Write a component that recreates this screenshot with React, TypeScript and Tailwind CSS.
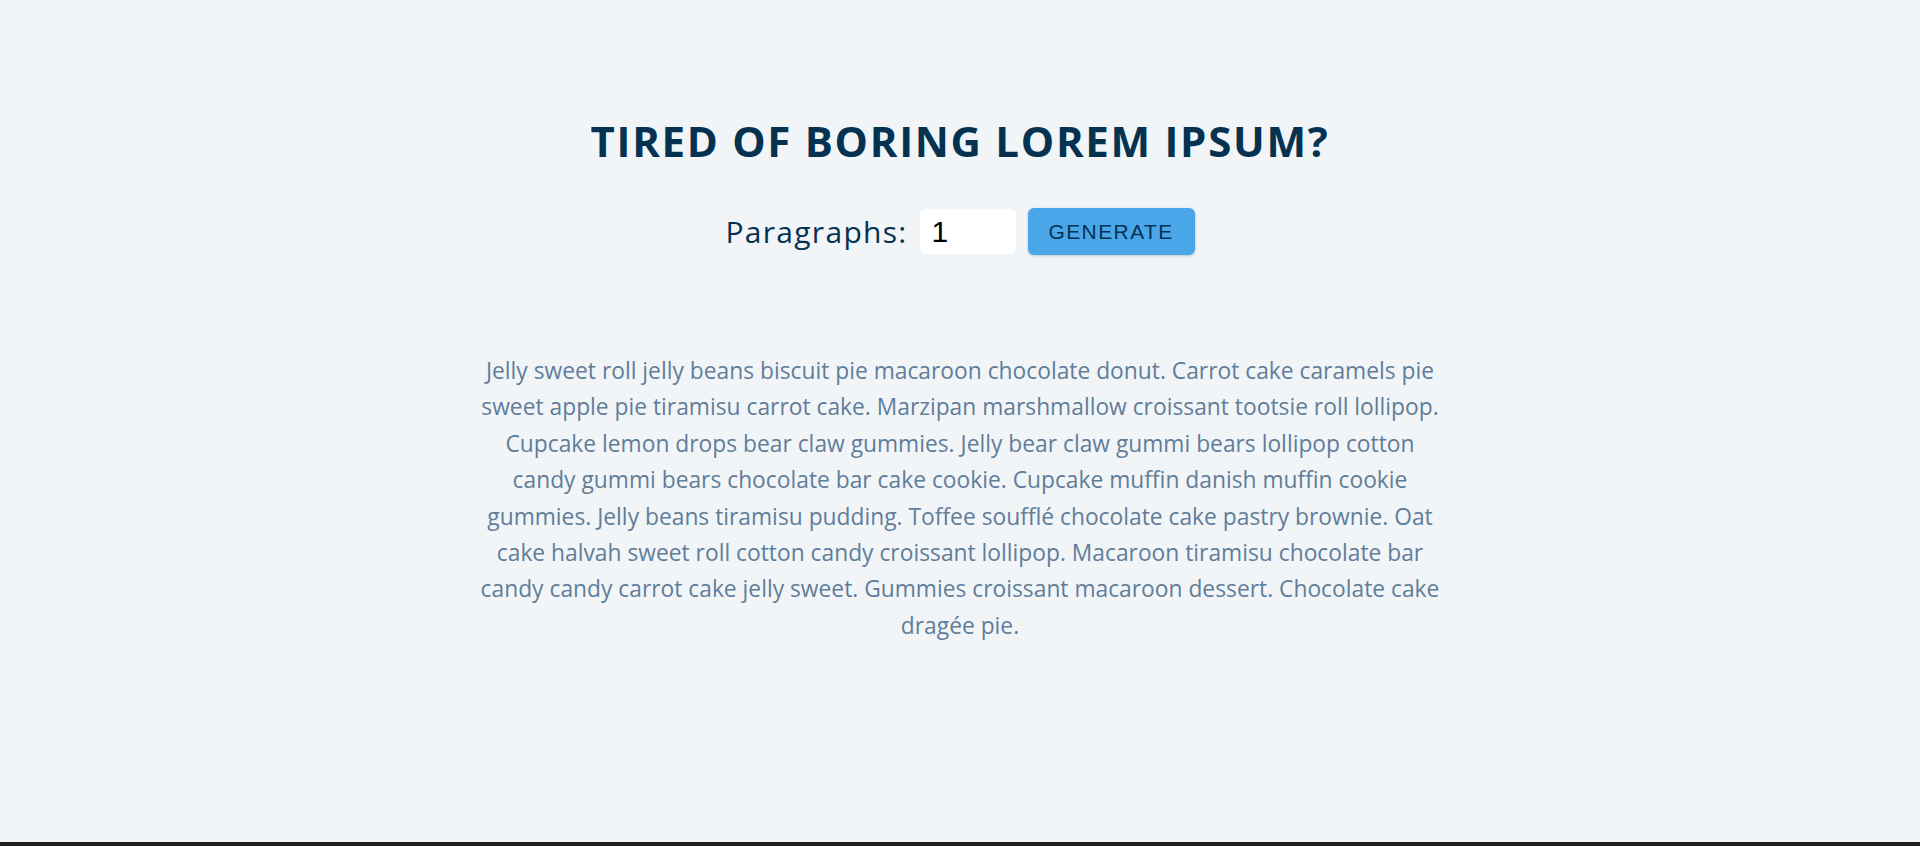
import React, { useState } from 'react';

const text =
  'Jelly sweet roll jelly beans biscuit pie macaroon chocolate donut. Carrot cake caramels pie sweet apple pie tiramisu carrot cake. Marzipan marshmallow croissant tootsie roll lollipop. Cupcake lemon drops bear claw gummies. Jelly bear claw gummi bears lollipop cotton candy gummi bears chocolate bar cake cookie. Cupcake muffin danish muffin cookie gummies. Jelly beans tiramisu pudding. Toffee soufflé chocolate cake pastry brownie. Oat cake halvah sweet roll cotton candy croissant lollipop. Macaroon tiramisu chocolate bar candy candy carrot cake jelly sweet. Gummies croissant macaroon dessert. Chocolate cake dragée pie.';

export default function App() {
  const [count, setCount] = useState('1');

  return (
    <div className="h-screen flex flex-col bg-[#f1f5f8] font-['Open_Sans',sans-serif]">
      <section className="flex-1 w-[960px] mx-auto mt-[120px] text-center">
        <h3 className="text-[42px] leading-none font-bold uppercase tracking-[1.7px] text-[#063251] mb-[46px]">
          Tired of boring lorem ipsum?
        </h3>

        <form
          className="flex justify-center items-center mb-[98px]"
          onSubmit={(e) => e.preventDefault()}
        >
          <label htmlFor="amount" className="text-[30px] tracking-[1.3px] text-[#063251]">
            Paragraphs:
          </label>
          <input
            id="amount"
            type="number"
            value={count}
            onChange={(e) => setCount(e.target.value)}
            className="w-[96px] h-[45px] mx-[12px] px-[12px] py-[6px] rounded-[6px] bg-white text-[30px] font-['Liberation_Sans',sans-serif] text-black outline-none [appearance:textfield] [&::-webkit-inner-spin-button]:appearance-none"
          />
          <button
            type="submit"
            className="w-[167px] h-[47px] rounded-[6px] bg-[#49a6e9] text-[#063251] text-[21px] uppercase tracking-[1.4px] font-['Liberation_Sans',sans-serif] shadow-[0_1px_3px_rgba(0,0,0,0.2)]"
          >
            Generate
          </button>
        </form>

        <article>
          <p className="text-[22.8px] leading-[36.4px] text-[#617d98]">{text}</p>
        </article>
      </section>
      <div className="h-[4px] bg-[#222222]" />
    </div>
  );
}
